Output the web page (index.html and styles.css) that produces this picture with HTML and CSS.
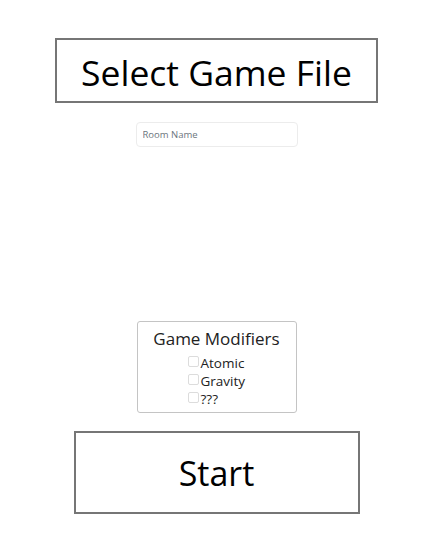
FILE: index.html
```html
<!DOCTYPE html>
<html>
<head>
<meta charset="utf-8">
<link rel="stylesheet" href="styles.css">
</head>
<body>
<main class="page">
  <button class="big-btn select-btn">Select Game File</button>
  <input class="room-input" type="text" placeholder="Room Name">
  <div class="spacer"></div>
  <fieldset class="modifiers">
    <div class="mod-title">Game Modifiers</div>
    <label class="mod-row"><span class="box"></span>Atomic</label>
    <label class="mod-row"><span class="box"></span>Gravity</label>
    <label class="mod-row"><span class="box"></span>???</label>
  </fieldset>
  <button class="big-btn start-btn">Start</button>
</main>
</body>
</html>
```
FILE: styles.css
```css
html, body {
  margin: 0;
  padding: 0;
  background: #fff;
}
body {
  font-family: "Open Sans", "Noto Sans", sans-serif;
  color: #000;
}
.page {
  display: flex;
  flex-direction: column;
  align-items: center;
  padding-top: 38px;
}
.big-btn {
  box-sizing: border-box;
  background: #fff;
  border: 2px solid #767676;
  font-family: "Open Sans", "Noto Sans", sans-serif;
  color: #000;
  padding: 0;
  display: flex;
  align-items: center;
  justify-content: center;
}
.select-btn {
  width: 323px;
  height: 65px;
  font-size: 35.5px;
  padding-top: 3px;
}
.room-input {
  box-sizing: border-box;
  margin-top: 19px;
  width: 162px;
  height: 25px;
  border: 1px solid #ececec;
  border-radius: 4px;
  padding: 0 6px;
  font-family: "Open Sans", sans-serif;
  font-size: 9.5px;
  outline: none;
}
.room-input::placeholder {
  color: #6c757d;
}
.spacer {
  height: 174px;
}
.modifiers {
  box-sizing: border-box;
  width: 160px;
  height: 92px;
  margin: 0;
  padding: 5px 0 0;
  border: 1px solid #c4c4c4;
  border-radius: 3px;
  display: flex;
  flex-direction: column;
  align-items: center;
}
.mod-title {
  font-size: 17px;
  line-height: 24px;
  color: #222;
  margin-bottom: 3px;
}
.mod-row {
  display: flex;
  align-items: center;
  font-size: 13.5px;
  line-height: 18px;
  color: #222;
  margin-left: 42px;
  width: 100px;
}
.box {
  box-sizing: border-box;
  width: 11px;
  height: 11px;
  border: 1px solid #dcdcdc;
  border-radius: 2px;
  margin-right: 2px;
  margin-top: -3px;
}
.start-btn {
  margin-top: 18px;
  width: 286px;
  height: 83px;
  font-size: 34px;
}
```
